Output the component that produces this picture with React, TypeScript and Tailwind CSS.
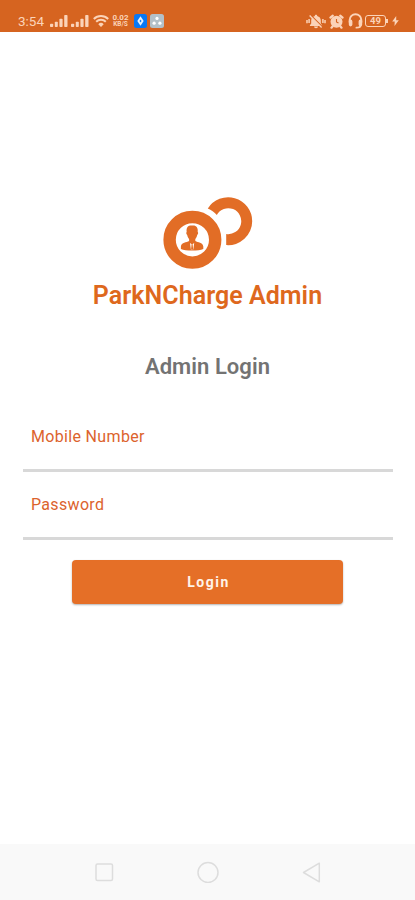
import { ReactNode } from "react";

function SignalIcon() {
  return (
    <svg className="h-3 w-[18px]" viewBox="0 0 18 12" fill="currentColor">
      <rect x="0" y="8.8" width="3.2" height="3.2" rx="0.8" />
      <rect x="4.8" y="6.8" width="3" height="5.2" rx="0.8" />
      <rect x="9.4" y="3.8" width="3.2" height="8.2" rx="0.8" />
      <rect x="14.2" y="0" width="3.3" height="12" rx="0.8" />
    </svg>
  );
}

function WifiIcon() {
  return (
    <svg className="h-3 w-4" viewBox="0 0 16 12" fill="none" stroke="currentColor" strokeWidth="2">
      <path d="M0.8 4a10.4 10.4 0 0 1 14.4 0" />
      <path d="M3.2 6.8a6.8 6.8 0 0 1 9.6 0" />
      <path d="M5.3 9.2a3.8 3.8 0 0 1 5.4 0L8 12z" fill="currentColor" stroke="none" />
    </svg>
  );
}

function MutedBellIcon() {
  return (
    <svg className="h-[15px] w-5" viewBox="0 0 20 15">
      <path
        d="M10 0.8c.8 0 1.2.5 1.2 1.1 2.2.6 3.6 2.2 3.6 4.5v3l1.3 1.9v.6H3.9v-.6l1.3-1.9v-3c0-2.3 1.4-3.9 3.6-4.5 0-.6.4-1.1 1.2-1.1zM8 12.5h4c0 2.3-4 2.3-4 0z"
        fill="currentColor"
      />
      <path d="M1 6v3.2M19 6v3.2M3.1 5v4M16.9 5v4" stroke="currentColor" strokeWidth="1.5" />
      <path d="M4.6 1l12 12" stroke="#d66420" strokeWidth="1.2" />
      <path d="M3.6 1.6l12 12" stroke="currentColor" strokeWidth="1.4" />
    </svg>
  );
}

function AlarmIcon() {
  return (
    <svg className="h-[15px] w-[15px]" viewBox="0 0 15 15">
      <path d="M1.4 3.6l2.4-2M13.6 3.6l-2.4-2M3.7 12.2l-1.2 1.5M11.3 12.2l1.2 1.5" stroke="currentColor" strokeWidth="2.2" strokeLinecap="round" />
      <circle cx="7.5" cy="7.8" r="6" fill="currentColor" />
      <path d="M7.5 5v3l2 1.1" fill="none" stroke="#d66420" strokeWidth="1.1" />
    </svg>
  );
}

function HeadsetIcon() {
  return (
    <svg className="h-4 w-[15px]" viewBox="0 0 15 16" fill="none" stroke="currentColor">
      <path d="M1.7 9.5V7a5.8 5.8 0 0 1 11.6 0v2.5" strokeWidth="2" />
      <path d="M2.6 8.4v3.2M12.4 8.4v3.2" strokeWidth="3.6" strokeLinecap="round" />
      <path d="M12.8 12c0 2-1.2 2.7-4.4 2.7" strokeWidth="1.8" strokeLinecap="round" />
    </svg>
  );
}

function StatusBar() {
  return (
    <header className="flex h-8 items-start bg-[#d66420] pl-[18px] pr-4 pt-[14px] text-[#fbd3b8]">
      <span className="w-8 text-[13.5px] leading-[15px]">3:54</span>
      <div className="flex h-[14px] items-center">
        <SignalIcon />
        <span className="w-[3px]" />
        <SignalIcon />
        <span className="w-1" />
        <WifiIcon />
        <div className="ml-[3px] flex w-[17px] flex-col text-center text-[8px] font-bold leading-[6.5px]">
          <span>0.02</span>
          <span className="text-[6.5px]">KB/S</span>
        </div>
        <svg className="ml-[5px] h-[14px] w-[13px]" viewBox="0 0 13 14">
          <rect width="13" height="14" rx="2.5" fill="#0878f5" />
          <path d="M6.5 2.3L9.7 7l-3.2 4.7L3.3 7z" fill="#e6f3ff" />
          <path d="M6.5 5.4L7.5 7l-1 1.6L5.5 7z" fill="#0878f5" />
        </svg>
        <svg className="ml-[3px] h-[14px] w-[14px]" viewBox="0 0 14 14">
          <rect width="14" height="14" rx="2.5" fill="#b3c0c8" />
          <circle cx="7" cy="4.4" r="1.6" fill="#fff" />
          <circle cx="4.1" cy="9.2" r="1.6" fill="#fff" />
          <circle cx="9.9" cy="9.2" r="1.6" fill="#fff" />
        </svg>
      </div>
      <div className="ml-auto flex h-[14px] items-center">
        <MutedBellIcon />
        <span className="w-[3px]" />
        <AlarmIcon />
        <span className="w-1" />
        <HeadsetIcon />
        <span className="ml-[2px] flex h-3 w-[21px] items-center justify-center rounded-[3px] border border-current text-[9.5px] font-bold leading-none">
          49
        </span>
        <span className="h-1 w-[2px] bg-current" />
        <svg className="ml-1 h-[10px] w-[7px]" viewBox="0 0 7 10" fill="currentColor">
          <path d="M4.2 0L0.2 5.6h2.5L2.5 10 6.8 4.3H4.2z" />
        </svg>
      </div>
    </header>
  );
}

function Logo() {
  return (
    <svg className="h-[74px] w-[90px]" viewBox="0.5 -0.3 90 74" fill="#e26d26">
      <path d="M45.3 12.3A24 24 0 0 1 89.7 24.9A24 24 0 0 1 63.7 48.8V37.7A13 13 0 1 0 54.3 18.7C51.8 16 48.8 13.8 45.3 12.3z" />
      <circle cx="29.9" cy="43.5" r="22.8" fill="none" stroke="#e26d26" strokeWidth="12.4" />
      {/* head, neck and shoulders */}
      <path d="M29.8 29.2c3.8-.5 6 2 5.4 6.5.8.5.4 2.4-.5 3-.3 2-1.1 3-1.9 3.9v2.2c2.6 1.5 7.4 1.3 8 5.3v2.5c-2.5 1.3-6.3 1.6-11.2 1.6s-8.7-.3-11.2-1.6v-2.5c.6-4 5.6-3.8 8.2-5.3v-2.2c-.8-.9-1.6-1.9-1.9-3.9-.9-.6-1.3-2.5-.5-3-.6-5 1.5-6.8 5.6-6.5z" />
      <path d="M27.5 46.6l2.1 1.7 2.1-1.7-.9 6.6h-2.4z" fill="#fff" />
      <path d="M29.1 48h1l.5 4.6-1 1.2-1-1.2z" />
    </svg>
  );
}

function Field({ children }: { children: ReactNode }) {
  return (
    <label className="flex h-[68.5px] flex-col border-b-[3px] border-[#d8d8d8] px-2 pt-[20.5px] text-base leading-[26px] tracking-[0.33px] text-[#dc632d]">
      {children}
    </label>
  );
}

function NavigationBar() {
  return (
    <nav className="flex h-14 items-center justify-between bg-[#f9f9f9] pl-[94px] pr-[93px]">
      <svg className="h-[22px] w-5" viewBox="0 0 20 22" fill="none" stroke="#dddddd" strokeWidth="1.5">
        <rect x="2" y="3" width="16.5" height="16.5" rx="1.5" />
      </svg>
      <svg className="h-[22px] w-[22px]" viewBox="0 0 22 22" fill="none" stroke="#dddddd" strokeWidth="1.5">
        <circle cx="11" cy="11.5" r="10" />
      </svg>
      <svg className="h-[22px] w-5" viewBox="0 0 20 22" fill="none" stroke="#dddddd" strokeWidth="1.5" strokeLinejoin="round">
        <path d="M1.5 11.5L17.3 2.2v18.6z" />
      </svg>
    </nav>
  );
}

export default function App() {
  return (
    <div className="flex h-[900px] w-full flex-col bg-white font-['Roboto','Liberation_Sans',sans-serif]">
      <StatusBar />
      <main className="flex flex-1 flex-col items-center pt-[164px]">
        <Logo />
        <h1 className="mt-[10px] text-[25px] font-semibold leading-8 tracking-[0.05px] text-[#de681d]">ParkNCharge Admin</h1>
        <h2 className="mt-10 text-[22px] font-semibold leading-[30px] tracking-[0.05px] text-[#737373]">Admin Login</h2>
        <form className="mt-[21px] flex w-full flex-col pl-[23px] pr-[22px]">
          <Field>Mobile Number</Field>
          <Field>Password</Field>
          <button
            type="button"
            className="mr-px mt-5 h-[44px] w-[271px] self-center rounded-[4px] bg-[#e56f27] pl-0.5 text-sm font-bold tracking-[1.5px] text-[#fff3e9] shadow-[0_1px_2px_rgba(0,0,0,0.3)]"
          >
            Login
          </button>
        </form>
      </main>
      <NavigationBar />
    </div>
  );
}
